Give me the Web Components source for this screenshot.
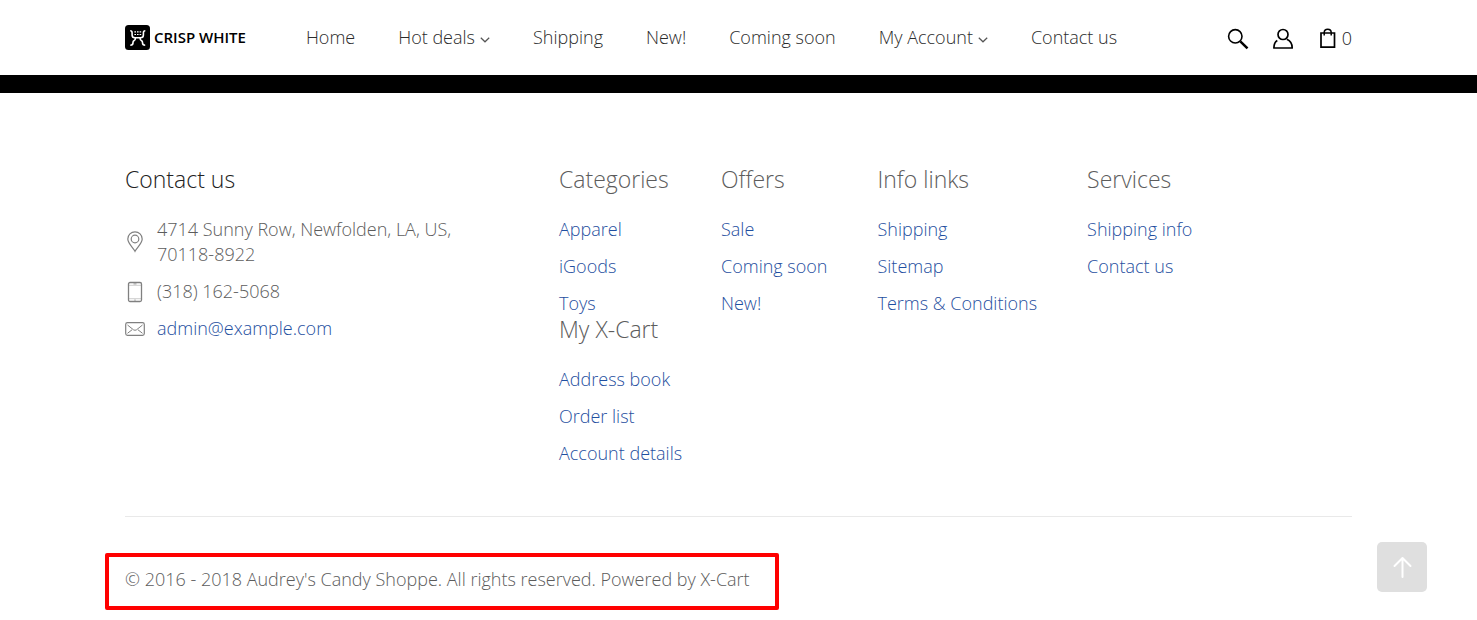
<!DOCTYPE html>
<html lang="en">
<head>
<meta charset="utf-8">
<meta name="viewport" content="width=device-width, initial-scale=1">
<title>Crisp White</title>
<style>
  body { margin: 0; background: #fff; font-family: "Open Sans", "Noto Sans", sans-serif; font-size: 18px; line-height: 25px; font-weight: 300; --edge: 125px; --link: #1f4fa0; --muted: #5c5c5c; color: #5c5c5c; }
</style>
</head>
<body>
<shop-page></shop-page>

<template id="t-page">
  <style>
    :host { display: block; }
    .band { height: 18px; background: #000; }
    main { padding: 72px var(--edge) 10px; }
    .cols { display: flex; align-items: flex-start; }
    contact-info { flex: 0 0 434px; }
    .menus { display: grid; grid-template-columns: repeat(4, max-content); grid-auto-rows: 150px; column-gap: 50px; }
    .narrow { width: 112px; }
    hr { border: 0; border-top: 1px solid #e9e9e9; margin: 51px 0 36px; }
    .copy { width: max-content; margin: 0 0 0 -20px; padding: 10px 25px 14px 16px; border: 4px solid #f00; border-radius: 2px; }
  </style>
  <site-header></site-header>
  <div class="band"></div>
  <main>
    <div class="cols">
      <contact-info></contact-info>
      <div class="menus">
        <link-group class="narrow" heading="Categories" links="Apparel|iGoods|Toys"></link-group>
        <link-group heading="Offers" links="Sale|Coming soon|New!"></link-group>
        <link-group heading="Info links" links="Shipping|Sitemap|Terms &amp; Conditions"></link-group>
        <link-group heading="Services" links="Shipping info|Contact us"></link-group>
        <link-group class="narrow" heading="My X-Cart" links="Address book|Order list|Account details"></link-group>
      </div>
    </div>
    <hr>
    <div class="copy">© 2016 - 2018 Audrey's Candy Shoppe. All rights reserved. Powered by X-Cart</div>
  </main>
  <back-to-top></back-to-top>
</template>

<template id="t-header">
  <style>
    :host { display: flex; align-items: center; height: 75px; padding: 0 var(--edge); color: #000; }
    .logo { display: flex; align-items: center; gap: 4px; color: #000; text-decoration: none; font-size: 15px; font-weight: 600; white-space: nowrap; }
    svg { display: block; flex: none; }
    nav { display: flex; gap: 43px; margin-left: 60px; }
    .tools { display: flex; align-items: center; gap: 24px; margin-left: auto; padding-top: 2px; }
    button { border: 0; padding: 0; background: none; color: #222; font: inherit; display: flex; align-items: center; gap: 5px; cursor: pointer; }
  </style>
  <a class="logo" href="#">
    <svg width="25" height="25" viewBox="0 0 25 25"><rect width="25" height="25" rx="3.5"/><g fill="none" stroke="#fff" stroke-width="1.6"><path d="M5.200 5.800q1.900 0 1.900 2V10q0 2.800 2.800 2.800h5.700q2.800 0 2.800-2.800V7.800q0-2 1.900-2"/><path d="M5.300 20.200q2.700 0 2.700-2.400v-.6q0-1.200 1.200-1.700 1.200-.4 1.200-2.500M20.200 20.200q-2.700 0-2.700-2.400v-.6q0-1.200-1.200-1.700-1.200-.4-1.200-2.500"/><path d="M9.400 6.800h6.800M9.400 9.500h6.800" stroke-width="1.200" stroke-dasharray="1.600 1"/></g></svg>
    <span>CRISP WHITE</span>
  </a>
  <nav aria-label="Main">
    <nav-item>Home</nav-item>
    <nav-item menu>Hot deals</nav-item>
    <nav-item>Shipping</nav-item>
    <nav-item>New!</nav-item>
    <nav-item>Coming soon</nav-item>
    <nav-item menu>My Account</nav-item>
    <nav-item>Contact us</nav-item>
  </nav>
  <div class="tools">
    <button aria-label="Search"><svg width="22" height="22" viewBox="0 0 22 22" fill="none" stroke="#000"><circle cx="8.300" cy="8.300" r="6.700" stroke-width="1.600"/><path d="m13.300 13.300 7.200 7" stroke-width="2.500"/></svg></button>
    <button aria-label="Account"><svg width="22" height="22" viewBox="1 0 22 22" fill="none" stroke="#000" stroke-width="1.700"><circle cx="11" cy="6.500" r="5"/><path d="M5.300 12.500Q1.900 14.500 1.900 20h18.300q0-6.500-5.400-8.700" stroke-linejoin="round"/></svg></button>
    <button aria-label="Cart"><svg width="18" height="22" viewBox="0 0 18 22" fill="none" stroke="#000" stroke-width="1.700"><path d="M2 5h13.500v14.200H2z"/><path d="M5.200 7.500V4.500q0-3.300 3.500-3.300t3.500 3.300v3" stroke-width="1.500"/></svg><span>0</span></button>
  </div>
</template>

<template id="t-nav">
  <style>
    :host { display: block; white-space: nowrap; }
    a { display: flex; align-items: center; gap: 5px; color: #2b2b2b; text-decoration: none; }
    svg { display: none; margin-top: 4px; }
    :host([menu]) svg { display: block; }
  </style>
  <a href="#"><slot></slot><svg width="10" height="6" viewBox="0 0 10 6" fill="none" stroke="#555" stroke-width="1.200"><path d="m.8.800 4.200 4 4.200-4"/></svg></a>
</template>

<template id="t-contact">
  <style>
    :host { display: block; }
    h2 { margin: 0 0 24px; font-size: 23px; line-height: 28px; font-weight: inherit; color: #222; }
    address { font-style: normal; display: grid; gap: 12px; width: 340px; }
    .row { display: grid; grid-template-columns: 20px 1fr; column-gap: 12px; align-items: center; }
    svg { display: block; justify-self: center; }
    a { color: var(--link); text-decoration: none; }
  </style>
  <h2>Contact us</h2>
  <address>
    <div class="row"><svg width="20" height="22" viewBox="0 0 20 22" fill="none" stroke="#808080" stroke-width="1.200"><path d="M10 20.300C8.500 17 2.800 12.500 2.800 8a7.200 7.200 0 0 1 14.400 0c0 4.500-5.700 9-7.200 12.300z"/><circle cx="10" cy="8" r="3.800"/></svg><span>4714 Sunny Row, Newfolden, LA, US, 70118-8922</span></div>
    <div class="row"><svg width="20" height="22" viewBox="0 0 20 22" fill="none" stroke="#808080" stroke-width="1.300"><rect x="3.500" y="1.500" width="13" height="19" rx="1.500"/><path d="M4 4.300h12M4 17.700h12" stroke-width=".4"/><path d="M8.500 2.900h3M9.300 19.100h1.400" stroke-width=".8"/></svg><span>(318) 162-5068</span></div>
    <div class="row"><svg width="20" height="16" viewBox="0 0 20 16" fill="none" stroke="#808080" stroke-width="1.200"><rect x=".7" y="1.700" width="18.600" height="12.600" rx="1.800"/><path d="m2.500 4 6 4.800q1.500 1 3 0l6-4.800M2.500 12.300 7 8.800M17.500 12.300 13 8.800" stroke-width="1"/></svg><a href="mailto:admin@example.com">admin@example.com</a></div>
  </address>
</template>

<template id="t-group">
  <style>
    :host { display: block; white-space: nowrap; }
    h2 { margin: 0 0 24px; font-size: 23px; line-height: 28px; font-weight: inherit; color: var(--muted); }
    ul { list-style: none; margin: 0; padding: 0; display: grid; gap: 12px; }
    a { color: var(--link); text-decoration: none; }
  </style>
  <h2></h2>
  <ul></ul>
</template>

<template id="t-top">
  <style>
    :host { position: fixed; right: 50px; bottom: 28px; }
    button { display: grid; place-items: center; width: 50px; height: 50px; padding: 0; border: 0; border-radius: 5px; background: #dfdfdf; cursor: pointer; }
  </style>
  <button aria-label="Back to top"><svg width="20" height="22" viewBox="0 0 20 22" fill="none" stroke="#fff" stroke-width="2" stroke-linecap="round" stroke-linejoin="round"><path d="M10.500 21V2.500M2.500 10l8-8 8 8"/></svg></button>
</template>

<script>
  class BaseElement extends HTMLElement {
    constructor() {
      super();
      this.attachShadow({ mode: "open" }).append(
        document.getElementById(this.constructor.template).content.cloneNode(true));
    }
  }
  class NavItem extends BaseElement { static template = "t-nav"; }
  class ContactInfo extends BaseElement { static template = "t-contact"; }
  class LinkGroup extends BaseElement {
    static template = "t-group";
    connectedCallback() {
      this.shadowRoot.querySelector("h2").textContent = this.getAttribute("heading");
      const items = this.getAttribute("links").split("|").map(text => {
        const li = document.createElement("li");
        const a = document.createElement("a");
        a.href = "#";
        a.textContent = text;
        li.append(a);
        return li;
      });
      this.shadowRoot.querySelector("ul").replaceChildren(...items);
    }
  }
  class BackToTop extends BaseElement {
    static template = "t-top";
    connectedCallback() {
      this.shadowRoot.querySelector("button").onclick = () => window.scrollTo({ top: 0, behavior: "smooth" });
    }
  }
  class SiteHeader extends BaseElement { static template = "t-header"; }
  class ShopPage extends BaseElement { static template = "t-page"; }
  customElements.define("nav-item", NavItem);
  customElements.define("contact-info", ContactInfo);
  customElements.define("link-group", LinkGroup);
  customElements.define("back-to-top", BackToTop);
  customElements.define("site-header", SiteHeader);
  customElements.define("shop-page", ShopPage);
</script>
</body>
</html>
